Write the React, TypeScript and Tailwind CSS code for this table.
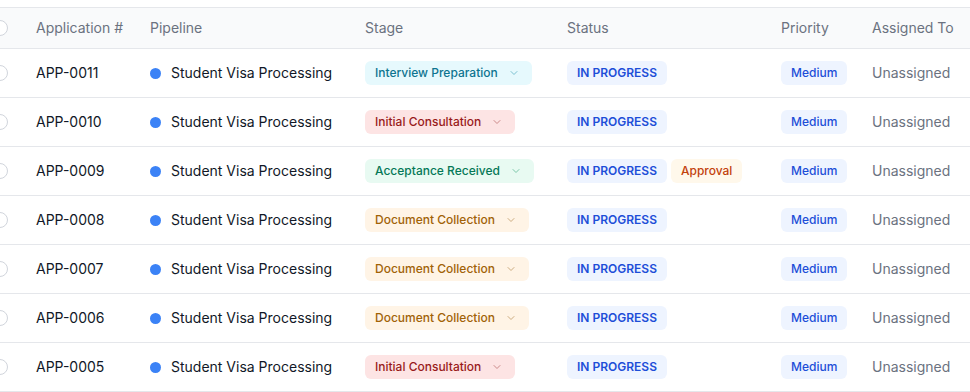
import React from 'react';
import { ChevronDown } from 'lucide-react';

type StageKey = 'interview' | 'initial' | 'acceptance' | 'documents';

const stageStyles: Record<StageKey, { label: string; className: string; chevron: string }> = {
  interview: { label: 'Interview Preparation', className: 'bg-[#e6f9fd] text-[#0e7490]', chevron: 'text-[#7cc1d1]' },
  initial: { label: 'Initial Consultation', className: 'bg-[#fde4e4] text-[#991b1b]', chevron: 'text-[#cc8a8a]' },
  acceptance: { label: 'Acceptance Received', className: 'bg-[#e8faf2] text-[#047857]', chevron: 'text-[#7cc7aa]' },
  documents: { label: 'Document Collection', className: 'bg-[#fff4e6] text-[#a16207]', chevron: 'text-[#ccac80]' },
};

const rows: Array<{ id: string; stage: StageKey; approval?: boolean }> = [
  { id: 'APP-0011', stage: 'interview' },
  { id: 'APP-0010', stage: 'initial' },
  { id: 'APP-0009', stage: 'acceptance', approval: true },
  { id: 'APP-0008', stage: 'documents' },
  { id: 'APP-0007', stage: 'documents' },
  { id: 'APP-0006', stage: 'documents' },
  { id: 'APP-0005', stage: 'initial' },
];

const cols = 'grid grid-cols-[48px_114px_215px_202px_214px_91px_1fr]';

function Circle() {
  return <div className="w-4 h-4 rounded-full border border-gray-300 bg-white" />;
}

export default function App() {
  return (
    <div className="w-[970px] h-[392px] overflow-hidden bg-white pt-[7px] font-['Inter',sans-serif] text-sm">
      <div className="-ml-6 w-[994px]">
        <div className={`${cols} h-[42px] items-center bg-[#f9fafb] border-y border-[#e5e7eb] text-[#6b7280]`}>
          <div className="flex justify-center"><Circle /></div>
          <div className="px-3">Application #</div>
          <div className="px-3">Pipeline</div>
          <div className="px-3">Stage</div>
          <div className="px-3">Status</div>
          <div className="px-3">Priority</div>
          <div className="px-3">Assigned To</div>
        </div>

        {rows.map((row) => {
          const stage = stageStyles[row.stage];
          return (
            <div key={row.id} className={`${cols} h-[49px] items-center border-b border-[#e5e7eb]`}>
              <div className="flex justify-center"><Circle /></div>
              <div className="px-3 text-[#111827]">{row.id}</div>
              <div className="px-3 flex items-center gap-2.5 text-[#111827]">
                <span className="w-[11px] h-[11px] rounded-full bg-[#3b82f6]" />
                <span>Student Visa Processing</span>
              </div>
              <div className="px-3">
                <span className={`inline-flex items-center h-6 pl-2.5 pr-3 rounded-md text-xs font-medium ${stage.className}`}>
                  {stage.label}
                  <ChevronDown className={`ml-2.5 w-3 h-3 ${stage.chevron}`} strokeWidth={2} />
                </span>
              </div>
              <div className="px-3 flex items-center gap-1">
                <span className="inline-flex items-center h-6 px-2.5 rounded-md bg-[#eef4ff] text-[#1d4ed8] text-xs font-semibold">
                  IN PROGRESS
                </span>
                {row.approval && (
                  <span className="inline-flex items-center h-6 px-2.5 rounded-md bg-[#fff8eb] text-[#c2410c] text-xs font-medium">
                    Approval
                  </span>
                )}
              </div>
              <div className="px-3">
                <span className="inline-flex items-center h-6 px-2.5 rounded-md bg-[#eef4ff] text-[#1d4ed8] text-xs font-medium">
                  Medium
                </span>
              </div>
              <div className="px-3 text-[#6b7280] whitespace-nowrap">Unassigned</div>
            </div>
          );
        })}
      </div>
    </div>
  );
}
